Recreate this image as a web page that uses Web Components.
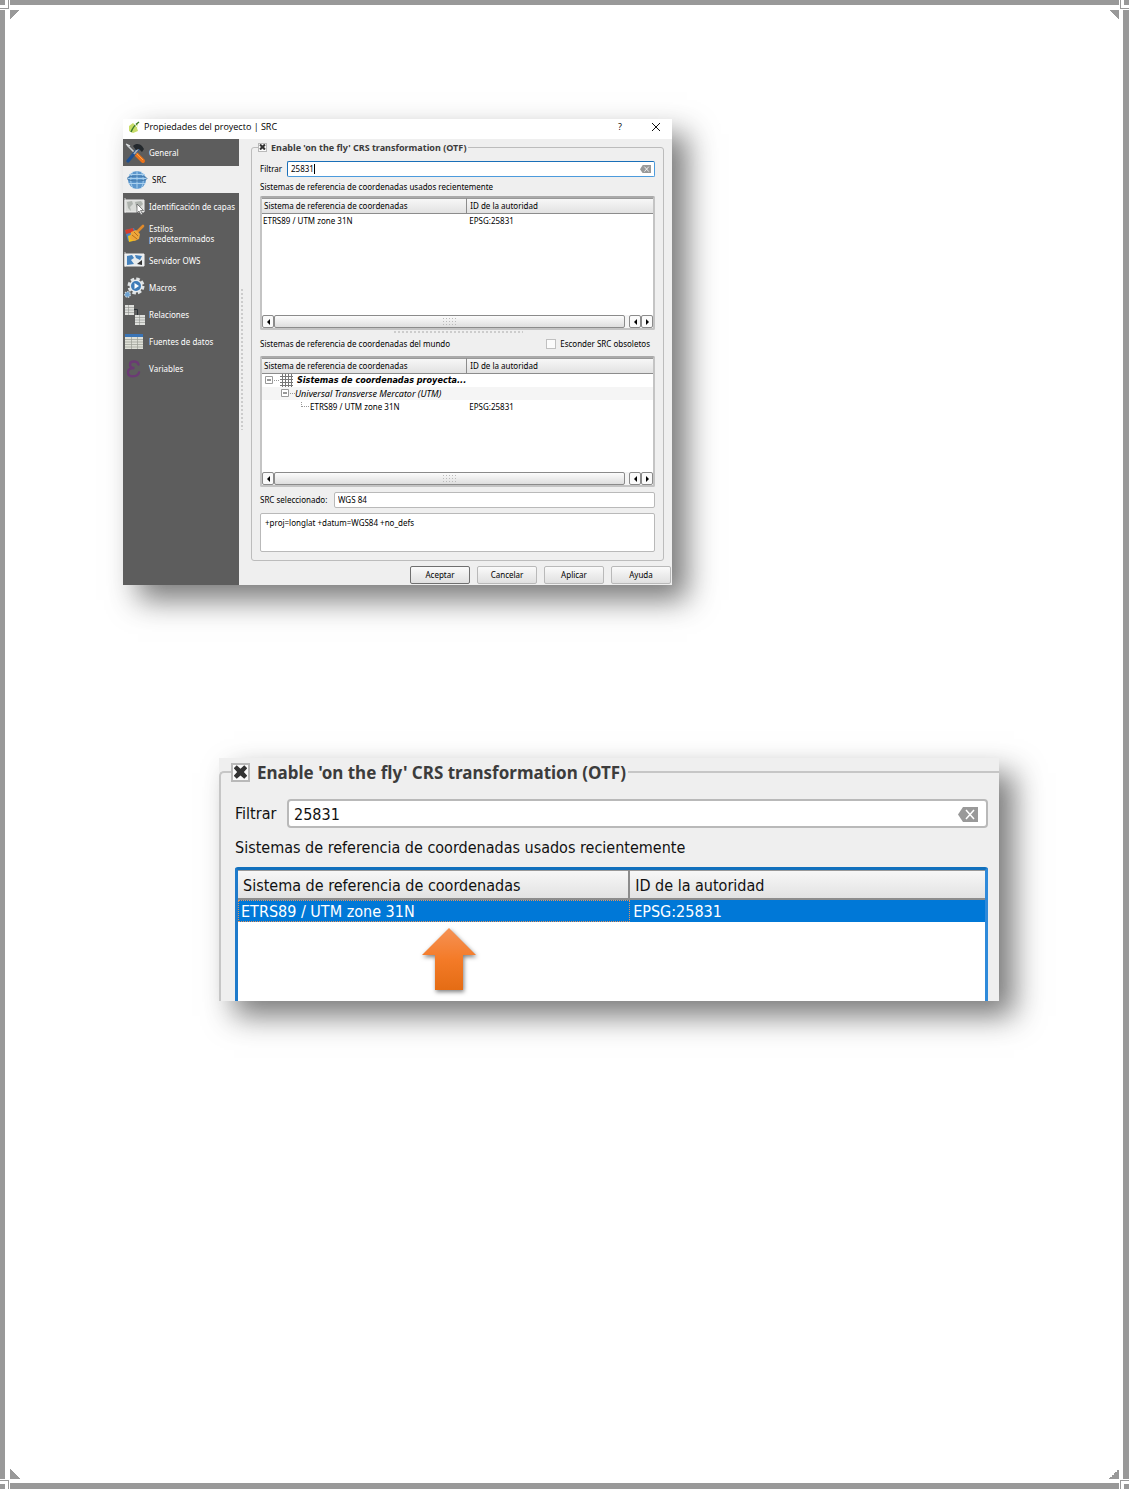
<!DOCTYPE html>
<html lang="es">
<head>
<meta charset="utf-8">
<title>Propiedades del proyecto</title>
<style>
  body { margin: 0; background: #fff; }
  project-dialog { max-width: 549px; margin: 109px 0 0 113px; }
  zoom-figure { max-width: 780px; margin: 173px 0 0 209px; }
</style>
</head>
<body>
<page-frame>
  <project-dialog heading="Propiedades del proyecto | SRC">
    <side-item slot="nav" icon="tools">General</side-item>
    <side-item slot="nav" icon="globe" selected>SRC</side-item>
    <side-item slot="nav" icon="identify">Identificación de capas</side-item>
    <side-item slot="nav" icon="brush">Estilos predeterminados</side-item>
    <side-item slot="nav" icon="ows">Servidor OWS</side-item>
    <side-item slot="nav" icon="gear">Macros</side-item>
    <side-item slot="nav" icon="relations">Relaciones</side-item>
    <side-item slot="nav" icon="table">Fuentes de datos</side-item>
    <side-item slot="nav" icon="epsilon">Variables</side-item>
    <check-group heading="Enable 'on the fly' CRS transformation (OTF)">
      <text-field label="Filtrar" value="25831" clearable active></text-field>
      <section-label>Sistemas de referencia de coordenadas usados recientemente</section-label>
      <crs-table source="recent" scroll></crs-table>
      <drag-handle></drag-handle>
      <section-label class="world">Sistemas de referencia de coordenadas del mundo
        <tick-box slot="end">Esconder SRC obsoletos</tick-box>
      </section-label>
      <crs-table source="world" scroll></crs-table>
      <text-field class="chosen" label="SRC seleccionado:" value="WGS 84"></text-field>
      <proj-text>+proj=longlat +datum=WGS84 +no_defs</proj-text>
    </check-group>
    <push-button slot="actions" default>Aceptar</push-button>
    <push-button slot="actions">Cancelar</push-button>
    <push-button slot="actions">Aplicar</push-button>
    <push-button slot="actions">Ayuda</push-button>
  </project-dialog>

  <zoom-figure>
    <check-group open-end heading="Enable 'on the fly' CRS transformation (OTF)">
      <text-field label="Filtrar" value="25831" clearable></text-field>
      <section-label>Sistemas de referencia de coordenadas usados recientemente</section-label>
      <crs-table source="picked" focused></crs-table>
    </check-group>
  </zoom-figure>
</page-frame>

<script>
const ICONS = {
  tools: `<path d="M3 3l9 9" stroke="#c9ced1" stroke-width="1.6"/><path d="M2 2l4 2" stroke="#e6e9ea" stroke-width="1.2"/>
    <path d="M11 11l8 8" stroke="#e8721c" stroke-width="4" stroke-linecap="round"/><path d="M12 11l7 7" stroke="#ffa54a" stroke-width="1"/>
    <path d="M14 7L4 19" stroke="#1d4f91" stroke-width="3.4" stroke-linecap="round"/><path d="M14 7l-4 5" stroke="#aab0b4" stroke-width="2"/>
    <path d="M9 4c3-3 7-2 9 0l2 3-2 3-3-3-3 1z" fill="#23282c"/>`,
  globe: `<circle cx="10" cy="11" r="9" fill="#5b96cc"/><path d="M0 9.500h20M2 5.500h16M2 14.500h16M10 2v18M6 2.500c-3 5-3 12 0 17M14 2.500c3 5 3 12 0 17" stroke="#a9d0ee" fill="none"/>
    <ellipse cx="10" cy="9.500" rx="10" ry="2.500" fill="none" stroke="#3b6f9f" stroke-width=".8"/>`,
  identify: `<path d="M1 2v15" stroke="#d5d5d5"/><path d="M1 4h19v12H1z" fill="#d9dbd8" stroke="#eee"/>
    <path d="M3 6l5-1 1 3-3 3 1 4-3-3zM11 6l6-1 2 3-3 3-2 4-2-5z" fill="#aeb3ae"/><path d="M13 8v9l2-2 2 4 1.500-1-2-3.500h3z" fill="#fff" stroke="#555" stroke-width=".7"/>`,
  brush: `<path d="M1 7l9-2 4 10-10 3z" fill="#4a86c0"/><path d="M1 7l8-2 1 4-8 2z" fill="#d43c2a"/><path d="M4 13l6-2 3 6-8 2z" fill="#f2c21b"/>
    <path d="M13 9l6-6" stroke="#e08a2a" stroke-width="2.600" stroke-linecap="round"/><path d="M7 9l5-2 4 4-1 5-5 2-4-2z" fill="#eda63a"/><path d="M10 9l4 4M8 12l5 4" stroke="#b96d19"/>`,
  ows: `<path d="M1 2v15" stroke="#d5d5d5"/><path d="M1 4h19v12H1z" fill="#e8ecee" stroke="#f5f5f5"/><path d="M3 6l5-1 2 3-3 2 3 4-7 1zM11 5l7 1-2 4-4-2z" fill="#4582bd"/>
    <path d="M13 14l5-4v5z" fill="#333"/>`,
  gear: `<circle cx="12" cy="9" r="7" fill="none" stroke="#dfe3e5" stroke-width="3" stroke-dasharray="3.500 2"/><circle cx="12" cy="9" r="6.500" fill="#e8ebed"/><circle cx="12" cy="9" r="5" fill="#3f7cb8"/>
    <path d="M10.500 6l4.500 3-4.500 3z" fill="#fff"/><circle cx="3.500" cy="17.500" r="2.800" fill="#6ea3d3" stroke="#cdd6dc" stroke-width="1.200" stroke-dasharray="1.500 1"/>`,
  relations: `<path d="M1 1h9v10H1zM11 11h10v10H11z" fill="#dfe0dd"/><path d="M1 3.500h9M1 6h9M1 8.500h9M4.500 1v10M11 13.500h10M11 16h10M11 18.500h10M15.500 11v10" stroke="#8f918d" stroke-width=".6"/>
    <path d="M10 5.500h3.500V11" fill="none" stroke="#2b3237"/>`,
  table: `<path d="M1 3h18v15H1z" fill="#dfe0d8"/><path d="M1 3h18v3H1z" fill="#3a74b5"/><path d="M1 8.500h18M1 11h18M1 13.500h18M1 16h18M7.500 6v12M13.500 6v12" stroke="#9a9c93" stroke-width=".7"/>`,
  epsilon: `<path d="M14.500 6.500c-1-4-8.500-4-8.500 0 0 2 1.500 3.500 4.500 3.500-4 0-6.500 1.500-6.500 4.500 0 5 9.500 5 11 0" fill="none" stroke="#6b3a74" stroke-width="2.400" stroke-linecap="round"/>`
};

const SOURCES = {
  recent: [{ name: "ETRS89 / UTM zone 31N", id: "EPSG:25831" }],
  picked: [{ name: "ETRS89 / UTM zone 31N", id: "EPSG:25831", cls: "picked" }],
  world: [
    { name: "Sistemas de coordenadas proyecta...", id: "", cls: "root", branch: "root" },
    { name: "Universal Transverse Mercator (UTM)", id: "", cls: "family", branch: "family" },
    { name: "ETRS89 / UTM zone 31N", id: "EPSG:25831", cls: "leaf", branch: "leaf" }
  ]
};

const EXPANDER = `<svg width="14" height="9" viewBox="0 0 14 9"><path d="M.5 .5h7v7h-7z" fill="#fff" stroke="#9a9a9a"/><path d="M2 4h4" stroke="#333"/><path d="M9 4.500h5" stroke="#999" stroke-dasharray="1 1"/></svg>`;
const BRANCHES = {
  root: EXPANDER + `<svg class="grid" width="13" height="13" viewBox="0 0 13 13"><path d="M0 2.500h13M0 5.500h13M0 8.500h13M0 11.500h13M2.500 0v13M5.500 0v13M8.500 0v13M11.500 0v13" stroke="#777"/></svg>`,
  family: EXPANDER,
  leaf: `<svg width="9" height="9" viewBox="0 0 9 9"><path d="M.5 0v5M1 4.500h8" fill="none" stroke="#999" stroke-dasharray="1 1"/></svg>`
};

// Shared base: puts markup and styles in an open shadow root
class BaseElement extends HTMLElement {
  connectedCallback() {
    if (this.shadowRoot) return;
    this.attachShadow({ mode: "open" });
    this.shadowRoot.innerHTML = `<style>*{box-sizing:border-box} ${this.css()}</style>${this.html()}`;
  }
}

class PageFrame extends BaseElement {
  css() {
    return `
      :host { display:grid; grid-template-columns:9px minmax(0,1fr) 9px; grid-template-rows:9px 1fr 9px; gap:1px; min-height:100vh; box-sizing:border-box; }
      .bar { background:#999; }
      .top { height:5px; }
      .left { width:5px; }
      .right { width:6px; justify-self:end; }
      .bottom { height:6px; align-self:end; }
      .corner { display:grid; border:0 solid #999; }
      .corner::before { content:""; width:5px; height:5px; background:#999; }
      .tl { border-width:0 1px 1px 0; }
      .tr { border-width:0 0 1px 1px; }
      .bl { border-width:1px 1px 0 0; }
      .br { border-width:1px 0 0 1px; }
      .tr::before, .br::before { justify-self:end; }
      .bl::before, .br::before { align-self:end; }
      main {
        background:
          linear-gradient(135deg, #999 50%, transparent 50%) 0 0,
          linear-gradient(225deg, #999 50%, transparent 50%) 100% 0,
          linear-gradient(45deg, #999 50%, transparent 50%) 0 100%,
          linear-gradient(315deg, #999 50%, transparent 50%) 100% 100%;
        background-size:10px 10px; background-repeat:no-repeat; display:flow-root;
      }`;
  }
  html() {
    return `
      <div class="corner tl"></div><div class="bar top"></div><div class="corner tr"></div>
      <div class="bar left"></div><main><slot></slot></main><div class="bar right"></div>
      <div class="corner bl"></div><div class="bar bottom"></div><div class="corner br"></div>`;
  }
}

class ProjectDialog extends BaseElement {
  css() {
    return `
      :host {
        display:block; background:#efefef; color:#000;
        box-shadow:15px 15px 28px rgba(51,51,51,.65);
        font-family:"Noto Sans", sans-serif; font-size:8px; line-height:10px;
      }
      header { display:flex; align-items:center; height:20px; padding:0 10px 4px 4px; background:#fff; font:9px/12px "Open Sans", sans-serif; }
      header svg { margin-right:3px; }
      h1 { flex:1; margin:0; font:inherit; }
      header button { width:12px; height:14px; padding:0; border:0; background:none; font:inherit; line-height:14px; display:grid; place-items:center; margin-left:24px; }
      header button svg { margin:0; }
      .body { display:flex; }
      nav { width:116px; flex:none; background:#5d5d5d; }
      .grip { width:4px; height:142px; margin:0 7px 6px 1px; align-self:center; flex:none;
        background:radial-gradient(circle, #ccc 1px, transparent 1px) 0 0 / 4px 4px; }
      .pane { flex:1; min-width:0; padding-top:2px; }
      ::slotted(check-group) { margin-right:8px; }
      footer { display:flex; justify-content:flex-end; gap:7px; padding:5px 1px 1px 0; }`;
  }
  html() {
    return `
      <header>
        <svg width="14" height="14" viewBox="0 0 14 14"><path d="M2 6l4-3 2 2 3-2-1 5 1 3-5 2-4-2z" fill="#c9dd6a"/><path d="M12 2C9 4 6 7 4 12" stroke="#3c7a2a" stroke-width="1.500" fill="none"/><path d="M8 4l2 3" stroke="#fff"/></svg>
        <h1>${this.getAttribute("heading")}</h1>
        <button type="button">?</button>
        <button type="button" aria-label="Cerrar"><svg width="8" height="8" viewBox="0 0 8 8"><path d="M0 0l8 8M8 0L0 8" stroke="#111"/></svg></button>
      </header>
      <div class="body">
        <nav><slot name="nav"></slot></nav>
        <span class="grip"></span>
        <div class="pane"><slot></slot><footer><slot name="actions"></slot></footer></div>
      </div>`;
  }
}

class SideItem extends BaseElement {
  css() {
    return `
      :host { display:block; }
      button { display:flex; align-items:center; gap:3px; width:100%; height:27px; padding:0 0 0 1px; border:0; background:none; color:#fff; font:inherit; line-height:10px; text-align:left; }
      svg { flex:none; }
      :host([selected]) button { background:#efefef; color:#000; padding-left:4px; }`;
  }
  html() {
    return `<button type="button"><svg width="22" height="22" viewBox="0 0 22 22" fill="none">${ICONS[this.getAttribute("icon")]}</svg><span><slot></slot></span></button>`;
  }
}

class CheckGroup extends BaseElement {
  css() {
    return `
      :host { display:block; }
      fieldset { min-width:0; margin:0; border:var(--group-line, 1px) solid #bcbcbc; border-radius:3px; padding:var(--group-pad, 8px 8px 8px 8px); }
      :host([open-end]) fieldset { border-right:0; border-bottom:0; border-radius:5px 0 0 0; border-color:#c6c6c6; }
      legend { padding:0 2px 0 0; margin-left:var(--legend-shift, -2px); }
      label { display:flex; align-items:center; gap:var(--legend-gap, 4px); height:var(--legend-height, 12px); color:#3c3c3c; font:bold var(--legend-font, 9px) "Noto Sans", sans-serif; }
      input { appearance:none; display:grid; place-items:center; margin:0; width:var(--check, 9px); height:var(--check, 9px); border:var(--check-line, 1px) solid #b9b9b9; background:#fafafa; }
      input:checked::before { content:""; width:90%; height:90%; background:#333;
        clip-path:polygon(22% 0,50% 25%,78% 0,100% 22%,75% 50%,100% 78%,78% 100%,50% 75%,22% 100%,0 78%,25% 50%,0 22%); }`;
  }
  html() {
    return `<fieldset><legend><label><input type="checkbox" checked>${this.getAttribute("heading")}</label></legend><slot></slot></fieldset>`;
  }
}

class TextField extends BaseElement {
  css() {
    return `
      :host { display:flex; align-items:center; }
      :host(.chosen) { --label-width:74px; margin:5px 0; }
      label { flex:none; width:var(--label-width, 27px); }
      .box { flex:1; display:flex; align-items:center; min-width:0; height:var(--field-height, 16px); padding:var(--field-pad, 0 3px); border:var(--field-line, 1px) solid #b9b9b9; border-radius:var(--field-radius, 2px); background:#fff; }
      :host([active]) .box { border-color:#1a6fb8 #4c9bdc #4c9bdc #1a6fb8; }
      input { border:0; padding:0; background:none; outline:0; color:inherit; font:inherit; field-sizing:content; }
      .caret { width:1px; height:10px; background:#000; }
      button { margin-left:auto; padding:0; border:0; background:none; display:flex; }
      svg { width:var(--clear, 11px); height:auto; }`;
  }
  html() {
    const clear = `<button type="button" aria-label="Borrar"><svg viewBox="0 0 20 15"><path d="M5 0h15v15H5L0 7.500z" fill="#999"/><path d="M8 3l8 9M16 3l-8 9" stroke="#fff" stroke-width="1.500"/></svg></button>`;
    return `
      <label for="field">${this.getAttribute("label")}</label>
      <span class="box"><input id="field" type="text" value="${this.getAttribute("value")}">
        ${this.hasAttribute("active") ? `<span class="caret"></span>` : ""}
        ${this.hasAttribute("clearable") ? clear : ""}</span>`;
  }
}

class SectionLabel extends BaseElement {
  css() {
    return `
      :host { display:flex; align-items:center; justify-content:space-between; height:var(--section-height, 19px); padding-right:5px; white-space:nowrap; }
      :host(.world) { margin-bottom:3px; }`;
  }
  html() {
    return `<span><slot></slot></span><slot name="end"></slot>`;
  }
}

class TickBox extends BaseElement {
  css() {
    return `
      :host { display:block; }
      label { display:flex; align-items:center; gap:4px; }
      input { appearance:none; margin:0; width:10px; height:10px; border:1px solid #c0c0c0; background:#fbfbfb; }`;
  }
  html() {
    return `<label><input type="checkbox"><span><slot></slot></span></label>`;
  }
}

class DragHandle extends BaseElement {
  css() {
    return `
      :host { display:block; height:4px; }
      span { display:block; width:130px; height:4px; margin:0 auto; background:radial-gradient(circle, #ccc 1px, transparent 1px) 0 0 / 4px 4px; }`;
  }
  html() {
    return `<span></span>`;
  }
}

class CrsTable extends BaseElement {
  css() {
    return `
      :host { display:flex; flex-direction:column; min-height:134px; box-sizing:border-box; border:var(--table-line, 2px) solid #c4c4c4; border-top-color:#aaa; border-radius:2px; background:#fff; }
      :host([source="world"]) { min-height:131px; }
      :host([focused]) { border-color:#1170bd #2f8ada #1170bd #1f7bcb; border-bottom:0; border-radius:3px 3px 0 0; }
      table { width:100%; border-collapse:separate; border-spacing:0; table-layout:fixed; }
      th { width:52.5%; height:var(--head-height, 16px); padding:var(--head-pad, 1px 3px 0); text-align:left; font-weight:normal; background:linear-gradient(#f8f8f8, #e2e2e2); border-bottom:var(--head-line, 1px) solid #8c8c8c; box-shadow:inset 0 1px #999; }
      th:first-child { border-right:var(--head-line, 1px) solid #8c8c8c; padding:var(--head-pad, 1px 2px 0); }
      th:last-child { width:auto; }
      td { height:var(--row-height, 13px); padding:var(--cell-pad, 0 2px); white-space:nowrap; }
      td:first-child { padding:var(--cell-pad, 0 1px); }
      .item { display:flex; align-items:center; height:13px; }
      .item svg { flex:none; }
      .item .grid { margin:0 4px 0 1px; }
      .root .item { padding-left:2px; font:italic bold 9px/13px "DejaVu Sans Condensed", "DejaVu Sans", sans-serif; }
      .family .item { padding-left:18px; font:italic 9px/13px "Noto Sans", sans-serif; }
      .family td { background:#f5f5f5; }
      .leaf .item { padding-left:38px; }
      .picked { background:#0078d7; color:#fff; }
      .picked td:first-child { outline:1px dotted #e8955a; outline-offset:-1px; }
      .scroll { display:flex; height:13px; margin-top:auto; background:#f4f4f4; }
      .scroll button { width:12px; padding:0; border:1px solid #8b8b8b; border-radius:2px; background:#fafafa; display:grid; place-items:center; }
      .thumb { flex:1; margin-right:4px; border:1px solid #8b8b8b; border-radius:2px; background:linear-gradient(#fcfcfc, #dedede); display:grid; place-items:center; }
      .thumb span { width:15px; height:9px; background:radial-gradient(circle, #bbb 1px, transparent 1px) 0 0 / 3px 3px; }`;
  }
  html() {
    const rows = SOURCES[this.getAttribute("source")].map(r => `
      <tr class="${r.cls || ""}"><td>${r.branch ? `<div class="item">${BRANCHES[r.branch]}<span>${r.name}</span></div>` : r.name}</td><td>${r.id}</td></tr>`).join("");
    const arrow = d => `<svg width="3" height="6" viewBox="0 0 3 6"><path d="${d}"/></svg>`;
    const left = `<button type="button" aria-label="Izquierda">${arrow("M3 0v6L0 3z")}</button>`;
    const right = `<button type="button" aria-label="Derecha">${arrow("M0 0v6l3-3z")}</button>`;
    return `
      <table>
        <thead><tr><th>Sistema de referencia de coordenadas</th><th>ID de la autoridad</th></tr></thead>
        <tbody>${rows}</tbody>
      </table>
      ${this.hasAttribute("scroll") ? `<div class="scroll">${left}<div class="thumb"><span></span></div>${left}${right}</div>` : ""}`;
  }
}

class ProjText extends BaseElement {
  css() {
    return `
      :host { display:block; }
      textarea { display:block; width:100%; height:39px; padding:4px; border:1px solid #b9b9b9; border-radius:2px; background:#fff; color:inherit; font:inherit; resize:none; }`;
  }
  html() {
    return `<textarea aria-label="Parámetros">${this.textContent}</textarea>`;
  }
}

class PushButton extends BaseElement {
  css() {
    return `
      :host { display:block; }
      button { width:60px; height:18px; padding:0; border:1px solid #b9b9b9; border-radius:2px; background:linear-gradient(#fafafa, #e0e0e0); color:#000; font:inherit; }
      :host([default]) button { border-color:#6f6f6f; }`;
  }
  html() {
    return `<button type="button"><slot></slot></button>`;
  }
}

// Enlarged detail of the group box, cut off at the right and the bottom
class ZoomFigure extends BaseElement {
  css() {
    return `
      :host {
        display:block; position:relative; background:#efefef; color:#111;
        box-shadow:15px 15px 28px rgba(51,51,51,.65);
        font-family:"DejaVu Sans Condensed", "DejaVu Sans", sans-serif; font-size:16px; line-height:20px;
        --group-line:2px; --group-pad:13px 11px 0 14px;
        --legend-shift:-4px; --legend-gap:7px; --legend-height:28px; --legend-font:17px; --check:19px; --check-line:2px;
        --label-width:52px; --field-height:29px; --field-pad:2px 8px 0 5px; --field-line:2px; --field-radius:4px; --clear:20px;
        --section-height:39px;
        --table-line:3px; --head-height:30px; --head-line:2px; --head-pad:3px 5px 0; --row-height:20px; --cell-pad:2px 3px 0;
      }
      ::slotted(check-group) { --cell-line:18px; }
      .arrow { position:absolute; left:203px; top:170px; width:54px; height:62px; overflow:visible; filter:drop-shadow(1px 2px 2px rgba(0,0,0,.5)); }`;
  }
  html() {
    return `
      <slot></slot>
      <svg class="arrow" viewBox="0 0 54 62">
        <defs><linearGradient id="fill" x2="0" y2="1"><stop offset="0" stop-color="#f59256"/><stop offset=".5" stop-color="#f47b28"/><stop offset="1" stop-color="#e46c14"/></linearGradient></defs>
        <path d="M27 0l27 27H41v35H13V27H0z" fill="url(#fill)"/>
      </svg>`;
  }
}

customElements.define("page-frame", PageFrame);
customElements.define("project-dialog", ProjectDialog);
customElements.define("side-item", SideItem);
customElements.define("check-group", CheckGroup);
customElements.define("text-field", TextField);
customElements.define("section-label", SectionLabel);
customElements.define("tick-box", TickBox);
customElements.define("drag-handle", DragHandle);
customElements.define("crs-table", CrsTable);
customElements.define("proj-text", ProjText);
customElements.define("push-button", PushButton);
customElements.define("zoom-figure", ZoomFigure);
</script>
</body>
</html>
